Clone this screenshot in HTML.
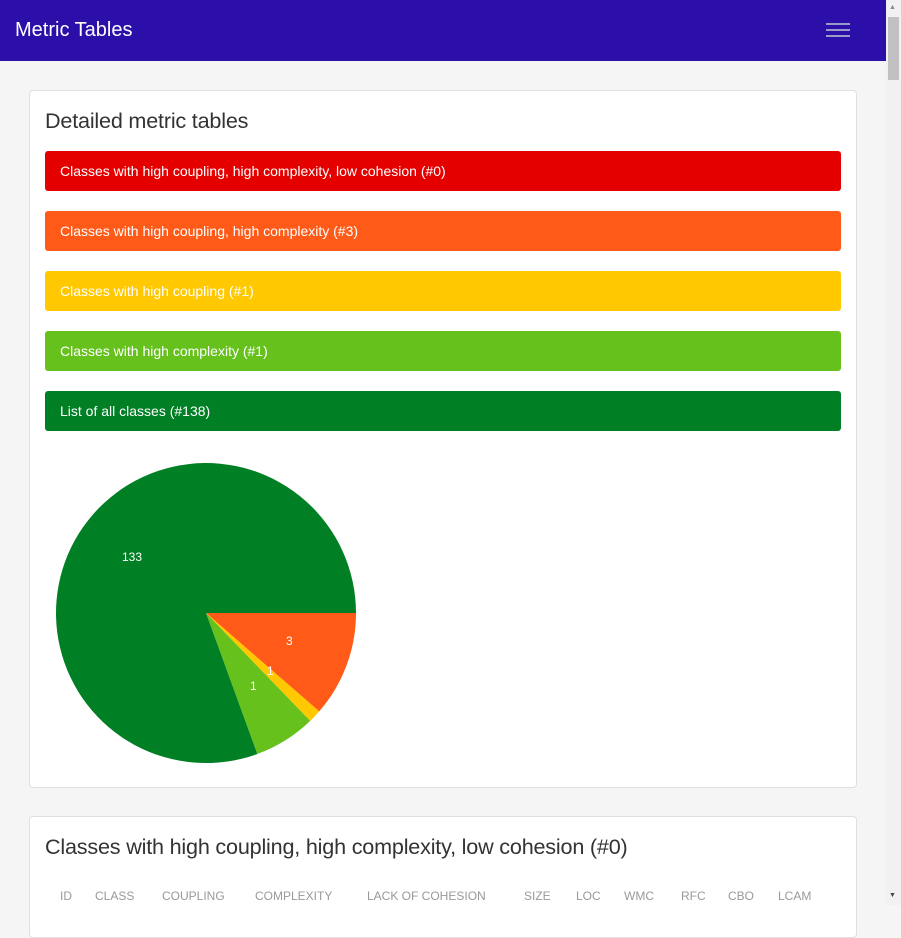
<!DOCTYPE html>
<html><head><style>
body{margin:0;background:#f5f5f5;font-family:"Liberation Sans",sans-serif;width:901px;height:905px;overflow:hidden;position:relative}
.nav{position:absolute;left:0;top:0;width:886px;height:61px;background:#2c0fa8}
.nav .t{position:absolute;left:15px;top:19px;color:#fff;font-size:20px}
.ham{position:absolute;left:826px;width:24px;height:2px;background:#9a9ac8}
.sb{position:absolute;left:886px;top:0;width:15px;height:905px;background:#f1f1f1}
.thumb{position:absolute;left:888px;top:17px;width:11px;height:63px;background:#c1c1c1}
.card{position:absolute;left:29px;width:826px;background:#fff;border:1px solid #e0e0e0;border-radius:4px}
h2{position:absolute;left:15px;margin:0;font-weight:300;color:#333;font-size:21.6px;letter-spacing:-0.2px}
.bar{position:absolute;left:15px;width:796px;height:40px;border-radius:3px;color:#fff;font-size:14px;line-height:40px;text-indent:15px}
.th{position:absolute;top:72px;font-size:12px;color:#999}
</style></head><body>
<div class="nav"><div class="t">Metric Tables</div>
<div class="ham" style="top:23px"></div><div class="ham" style="top:29px"></div><div class="ham" style="top:35px"></div></div>
<div class="sb"></div><div class="thumb"></div>
<div style="position:absolute;left:889px;top:4px;font-size:7px;color:#888">▲</div>
<div style="position:absolute;left:889px;top:892px;font-size:7px;color:#444">▼</div>
<div class="card" style="top:90px;height:696px">
<h2 style="top:17px">Detailed metric tables</h2>
<div class="bar" style="top:60px;background:#e50000">Classes with high coupling, high complexity, low cohesion (#0)</div>
<div class="bar" style="top:120px;background:#ff5a17">Classes with high coupling, high complexity (#3)</div>
<div class="bar" style="top:180px;background:#ffc800">Classes with high coupling (#1)</div>
<div class="bar" style="top:240px;background:#66c11c">Classes with high complexity (#1)</div>
<div class="bar" style="top:300px;background:#007f24">List of all classes (#138)</div>
<svg style="position:absolute;left:0;top:0" width="826" height="696" viewBox="30 91 826 696">
<path d="M206 613 L356 613 A150 150 0 0 1 319.2 711.4Z" fill="#ff5a17"/>
<path d="M206 613 L319.2 711.4 A150 150 0 0 1 310.2 720.9Z" fill="#ffc800"/>
<path d="M206 613 L310.2 720.9 A150 150 0 0 1 257.3 754Z" fill="#66c11c"/>
<path d="M206 613 L257.3 754 A150 150 0 1 1 356 613Z" fill="#007f24"/>
<g fill="#fff" font-size="12" font-family="Liberation Sans,sans-serif">
<text x="122" y="561">133</text><text x="286" y="645">3</text><text x="267" y="675">1</text><text x="250" y="690">1</text></g>
</svg>
</div>
<div class="card" style="top:816px;height:120px">
<h2 style="top:17px">Classes with high coupling, high complexity, low cohesion (#0)</h2>
<span class="th" style="left:30px">ID</span><span class="th" style="left:65px">CLASS</span><span class="th" style="left:132px">COUPLING</span><span class="th" style="left:225px">COMPLEXITY</span><span class="th" style="left:337px">LACK OF COHESION</span><span class="th" style="left:494px">SIZE</span><span class="th" style="left:546px">LOC</span><span class="th" style="left:594px">WMC</span><span class="th" style="left:651px">RFC</span><span class="th" style="left:698px">CBO</span><span class="th" style="left:748px">LCAM</span>
</div>
</body></html>
